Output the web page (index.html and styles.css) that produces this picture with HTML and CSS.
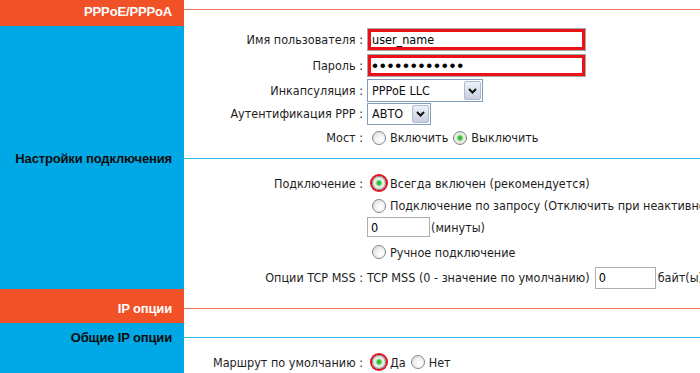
FILE: index.html
```html
<!DOCTYPE html>
<html lang="ru">
<head>
<meta charset="utf-8">
<title>PPPoE/PPPoA</title>
<link rel="stylesheet" href="styles.css">
</head>
<body>
<div class="page">
  <div class="row r-head hdr">
    <div class="side">PPPoE/PPPoA</div>
    <div class="main"><div class="rule red"></div></div>
  </div>

  <div class="row r-user">
    <div class="side"></div>
    <div class="main">
      <span class="lbl">Имя пользователя :</span>
      <span class="val"><input class="txt hl" type="text" value="user_name"></span>
    </div>
  </div>

  <div class="row r-pass">
    <div class="side"></div>
    <div class="main">
      <span class="lbl">Пароль :</span>
      <span class="val"><input class="txt hl pw" type="password" value="abcdefghijkl"></span>
    </div>
  </div>

  <div class="row r-encap">
    <div class="side"></div>
    <div class="main">
      <span class="lbl">Инкапсуляция :</span>
      <span class="val">
        <span class="sel sel-encap"><select><option>PPPoE LLC</option></select><span class="btn"><svg width="9" height="6" viewBox="0 0 9 6"><path d="M1 1l3.5 3.5L8 1" fill="none" stroke="#111" stroke-width="2"/></svg></span></span>
      </span>
    </div>
  </div>

  <div class="row r-auth">
    <div class="side"></div>
    <div class="main">
      <span class="lbl">Аутентификация PPP :</span>
      <span class="val">
        <span class="sel sel-auth"><select><option>АВТО</option></select><span class="btn"><svg width="9" height="6" viewBox="0 0 9 6"><path d="M1 1l3.5 3.5L8 1" fill="none" stroke="#111" stroke-width="2"/></svg></span></span>
      </span>
    </div>
  </div>

  <div class="row r-bridge">
    <div class="side"></div>
    <div class="main">
      <span class="lbl">Мост :</span>
      <span class="val">
        <input class="radio" type="radio" name="bridge"><label>Включить</label>
        <input class="radio" type="radio" name="bridge" checked><label>Выключить</label>
      </span>
    </div>
  </div>

  <div class="row r-div">
    <div class="side">Настройки подключения</div>
    <div class="main"><div class="rule blue"></div></div>
  </div>

  <div class="row r-conn">
    <div class="side"></div>
    <div class="main">
      <span class="lbl">Подключение :</span>
      <span class="val"><input class="radio ring" type="radio" name="conn" checked><label>Всегда включен (рекомендуется)</label></span>
    </div>
  </div>

  <div class="row r-demand">
    <div class="side"></div>
    <div class="main">
      <span class="lbl"></span>
      <span class="val"><input class="radio" type="radio" name="conn"><label>Подключение по запросу (Отключить при неактивности)</label></span>
    </div>
  </div>

  <div class="row r-min">
    <div class="side"></div>
    <div class="main">
      <span class="lbl"></span>
      <span class="val"><input class="txt t-min" type="text" value="0"><span>(минуты)</span></span>
    </div>
  </div>

  <div class="row r-manual">
    <div class="side"></div>
    <div class="main">
      <span class="lbl"></span>
      <span class="val"><input class="radio" type="radio" name="conn"><label>Ручное подключение</label></span>
    </div>
  </div>

  <div class="row r-tcp">
    <div class="side"></div>
    <div class="main">
      <span class="lbl">Опции TCP MSS :</span>
      <span class="val"><span>TCP MSS (0 - значение по умолчанию)</span><input class="txt t-mss" type="text" value="0"><span>байт(ы)</span></span>
    </div>
  </div>

  <div class="row r-iphead hdr">
    <div class="side">IP опции</div>
    <div class="main"><div class="rule red"></div></div>
  </div>

  <div class="row r-gen">
    <div class="side">Общие IP опции</div>
    <div class="main"><div class="rule blue"></div></div>
  </div>

  <div class="row r-route">
    <div class="side"></div>
    <div class="main">
      <span class="lbl">Маршрут по умолчанию :</span>
      <span class="val">
        <input class="radio ring" type="radio" name="route" checked><label>Да</label>
        <input class="radio" type="radio" name="route"><label>Нет</label>
      </span>
    </div>
  </div>
</div>
</body>
</html>
```

FILE: styles.css
```css
html, body {
  margin: 0;
  padding: 0;
  background: #fff;
}
body {
  font-family: "DejaVu Sans Condensed", "DejaVu Sans", sans-serif;
  font-size: 12.5px;
  color: #1e1e1e;
  overflow: hidden;
}
.page {
  width: 700px;
  overflow: hidden;
}
.row {
  display: flex;
  white-space: nowrap;
}
.side {
  width: 184px;
  flex: none;
  box-sizing: border-box;
  background: #00a9e6;
  padding-right: 12px;
  display: flex;
  align-items: center;
  justify-content: flex-end;
  font-family: "Liberation Sans", Arial, sans-serif;
  font-weight: bold;
  font-size: 13px;
  letter-spacing: -0.15px;
  color: #0d0d0d;
}
.main {
  flex: 1;
  min-width: 0;
  display: flex;
  align-items: center;
  box-sizing: border-box;
}
.lbl {
  width: 183px;
  flex: none;
  box-sizing: border-box;
  padding-right: 4px;
  text-align: right;
}
.val {
  display: flex;
  align-items: center;
}
.rule {
  flex: 1;
  height: 1px;
}
.rule.red { background: #f2735c; }
.rule.blue { background: #2cb6ec; }

.hdr .side {
  background: #f15126;
  color: #fff;
}

/* row heights */
.r-head { height: 26px; }
.r-head .side, .r-head .main { align-items: flex-start; }
.r-head .side { padding-top: 4px; line-height: 15px; }
.r-head .rule { margin-top: 9px; }
.r-user { height: 26px; }
.r-pass { height: 27px; }
.r-encap { height: 23px; }
.r-auth { height: 23px; }
.r-bridge { height: 25px; }
.r-div { height: 16px; }
.r-conn { height: 29px; }
.r-conn .main { padding-top: 5px; }
.r-demand { height: 21px; }
.r-min { height: 22px; }
.r-manual { height: 28px; }
.r-tcp { height: 23px; }
.r-iphead { height: 34px; }
.r-iphead .side, .r-iphead .main { padding-top: 4px; }
.r-gen { height: 28px; }
.r-route { height: 22px; }

/* text inputs */
.txt {
  font-family: "DejaVu Sans Condensed", "DejaVu Sans", sans-serif;
  font-size: 12.5px;
  color: #000;
  background: #fff;
  border: 1px solid #a7aeb6;
  box-sizing: border-box;
  padding: 0 3px;
  margin: 0;
  outline: none;
}
.txt.hl {
  width: 217px;
  height: 21px;
  margin-left: 1px;
  border: 3px solid #ec1118;
  box-shadow: 0 0 0 1px #a8a8a8;
  padding: 0 1px;
}
.txt.pw {
  font-family: "Liberation Sans", Arial, sans-serif;
  font-size: 17px;
  letter-spacing: 1.8px;
}
.t-min {
  width: 63px;
  height: 20px;
  margin-right: 1px;
}
.t-mss {
  width: 61px;
  height: 22px;
  margin: 0 2px 0 5px;
}

/* selects */
.sel {
  display: inline-flex;
  align-items: stretch;
  box-sizing: border-box;
  border: 1px solid #7f9db9;
  background: #fff;
  height: 23px;
}
.sel-encap { width: 116px; }
.sel-auth { width: 64px; height: 22px; }
.sel select {
  -webkit-appearance: none;
  appearance: none;
  border: 0;
  background: transparent;
  font-family: "DejaVu Sans Condensed", "DejaVu Sans", sans-serif;
  font-size: 12.5px;
  color: #111;
  padding: 0 0 0 4px;
  margin: 0;
  flex: 1;
  min-width: 0;
  outline: none;
}
.sel .btn {
  width: 17px;
  flex: none;
  margin: 1px;
  box-sizing: border-box;
  border: 1px solid #b0bbd0;
  border-radius: 2px;
  background: linear-gradient(#eef1f7, #c6cfe0);
  display: flex;
  align-items: center;
  justify-content: center;
}

/* radios */
.radio {
  -webkit-appearance: none;
  appearance: none;
  width: 14px;
  height: 14px;
  margin: 0 4px 0 5px;
  box-sizing: border-box;
  border-radius: 50%;
  border: 1px solid #7d8791;
  background: radial-gradient(circle at 65% 65%, #ffffff 0, #f2f2ee 45%, #d4d4cc 100%);
  flex: none;
}
.radio:checked {
  background: radial-gradient(circle, #2fae2f 0, #3cbf3c 1.6px, #a8e2a8 3px, #f4f4f0 4px, #e6e6e0 60%, #d0d0c8 100%);
}
.radio.ring {
  box-shadow: 0 0 0 2px #e3101a;
}
label {
  color: #1e1e1e;
}
```
